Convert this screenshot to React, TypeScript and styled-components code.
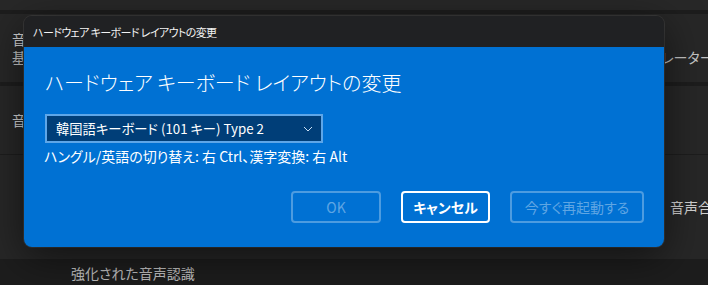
import React from "react";
import styled, { createGlobalStyle } from "styled-components";

const GlobalStyle = createGlobalStyle`
  html, body {
    margin: 0;
    padding: 0;
    background: #1e1e1e;
    overflow: hidden;
  }
  body {
    font-family: "Noto Sans CJK JP", "Noto Sans", sans-serif;
    font-feature-settings: "palt";
    -webkit-font-smoothing: antialiased;
  }
`;

const Page = styled.div`
  position: relative;
  width: 708px;
  height: 285px;
  overflow: hidden;
  display: flex;
  flex-direction: column;
  gap: 4px;
  background: #1d1d1d;
`;

const TopStrip = styled.div`
  height: 10px;
  flex: none;
  background: #282828;
`;

const Card = styled.div<{ $height: number; $align?: string }>`
  height: ${(p) => p.$height}px;
  flex: none;
  background: #272727;
  display: flex;
  flex-direction: column;
  justify-content: center;
  align-items: ${(p) => p.$align || "flex-start"};
  padding: 0 12px;
  color: #d2d2d2;
  font-size: 14px;
  line-height: 18px;
  white-space: nowrap;
  overflow: hidden;
  box-sizing: border-box;
`;

const Group = styled.div`
  display: flex;
  flex-direction: column;
  gap: 1px;
`;

const SubRow = styled.div`
  height: 20px;
  padding-left: 71px;
  display: flex;
  align-items: center;
  color: #bdbdbd;
  font-size: 14px;
`;

const Desc = styled.div`
  display: flex;
  color: #c4c4c4;
`;

const DescLead = styled.span<{ $width: number }>`
  width: ${(p) => p.$width}px;
  overflow: hidden;
  flex: none;
`;

const Overflowing = styled.div<{ $shift: number }>`
  margin-right: ${(p) => -p.$shift}px;
`;

const Dialog = styled.div`
  position: absolute;
  left: 24px;
  top: 16px;
  width: 640px;
  height: 231px;
  display: flex;
  flex-direction: column;
  border-radius: 8px;
  overflow: hidden;
  box-shadow: 0 10px 40px rgba(0, 0, 0, 0.55), 0 0 0 1px #3a3a3a;
`;

const TitleBar = styled.div`
  height: 31px;
  flex: none;
  background: #202123;
  color: #f2f2f2;
  font-size: 11px;
  letter-spacing: -0.6px;
  display: flex;
  align-items: center;
  padding-left: 9px;
  box-sizing: border-box;
`;

const Body = styled.div`
  flex: 1;
  background: #0071d3;
  display: flex;
  flex-direction: column;
  padding: 20px 20px 24px 21px;
  color: #ffffff;
`;

const Heading = styled.div`
  font-size: 20px;
  line-height: 32px;
  font-weight: 300;
`;

const Select = styled.div`
  margin-top: 15px;
  width: 278px;
  height: 29px;
  box-sizing: border-box;
  background: #003e78;
  border: 2px solid #5ea6e8;
  display: flex;
  align-items: center;
  justify-content: space-between;
  padding: 0 8px 0 9px;
  font-size: 13.3px;
`;

const Hint = styled.div`
  margin-top: 3px;
  margin-left: -1px;
  font-size: 14px;
  line-height: 20px;
`;

const Buttons = styled.div`
  margin-top: auto;
  display: flex;
  justify-content: flex-end;
  gap: 20px;
`;

const Button = styled.div<{ $width: number; $primary?: boolean }>`
  width: ${(p) => p.$width}px;
  height: 32px;
  box-sizing: border-box;
  border-radius: 4px;
  border: 2px solid
    ${(p) => (p.$primary ? "#ffffff" : "rgba(255, 255, 255, 0.3)")};
  color: ${(p) => (p.$primary ? "#ffffff" : "rgba(255, 255, 255, 0.38)")};
  font-weight: ${(p) => (p.$primary ? 700 : 400)};
  font-size: 14px;
  display: flex;
  align-items: center;
  justify-content: center;
`;

const Chevron = () => (
  <svg width="10" height="6" viewBox="0 0 10 6" fill="none">
    <path d="M1 1l4 4 4-4" stroke="#c9def3" strokeWidth="1" />
  </svg>
);

export default function App() {
  return (
    <>
      <GlobalStyle />
      <Page>
        <TopStrip />
        <Card $height={68}>
          <div>音声</div>
          <Desc>
            <DescLead $width={636}>
              基本的な音声を選んで、読み上げの速度や高さを調整します。
            </DescLead>
            <span>ナレーターの音声</span>
          </Desc>
        </Card>
        <Group>
          <Card $height={68}>
            <div>音声の追加</div>
          </Card>
          <Card $height={104} $align="flex-end">
            <Overflowing $shift={30}>音声合成</Overflowing>
          </Card>
        </Group>
        <SubRow>強化された音声認識</SubRow>

        <Dialog>
          <TitleBar>ハードウェア キーボード レイアウトの変更</TitleBar>
          <Body>
            <Heading>ハードウェア キーボード レイアウトの変更</Heading>
            <Select>
              <span>韓国語キーボード (101 キー) Type 2</span>
              <Chevron />
            </Select>
            <Hint>ハングル/英語の切り替え: 右 Ctrl、漢字変換: 右 Alt</Hint>
            <Buttons>
              <Button $width={90}>OK</Button>
              <Button $width={89} $primary>
                キャンセル
              </Button>
              <Button $width={134}>今すぐ再起動する</Button>
            </Buttons>
          </Body>
        </Dialog>
      </Page>
    </>
  );
}
